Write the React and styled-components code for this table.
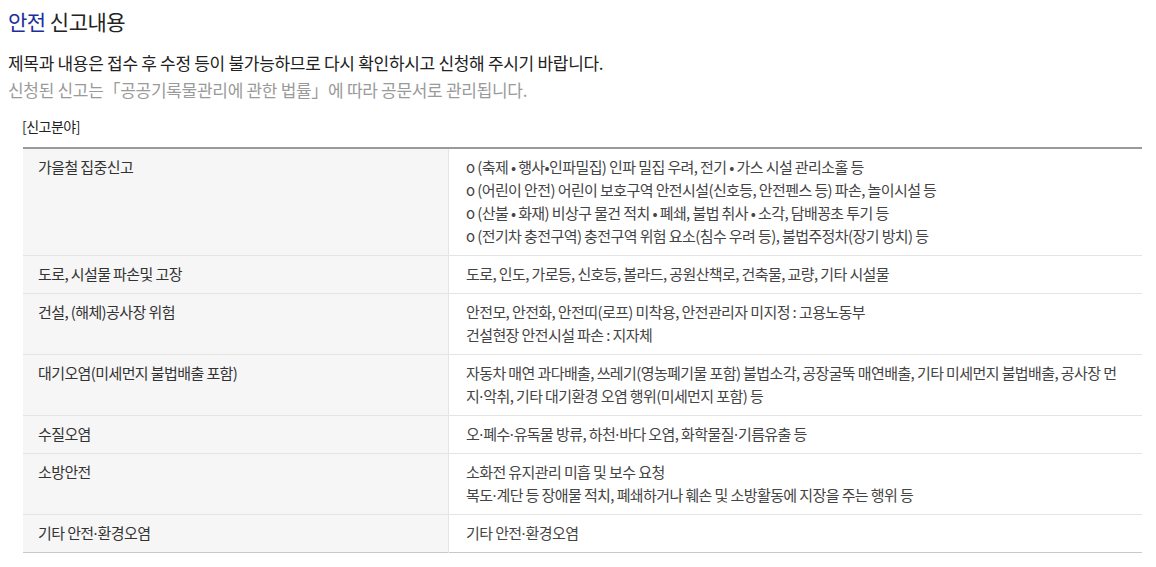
import React from 'react'
import styled, { createGlobalStyle } from 'styled-components'

const GlobalStyle = createGlobalStyle`
  body {
    margin: 0;
    background: #fff;
    font-family: 'Noto Sans CJK KR', 'Noto Sans', sans-serif;
    color: #333;
  }
`

const Page = styled.div`
  padding: 6px 14px 0 8px;
`

const Title = styled.h2`
  margin: 0;
  font-size: 21px;
  font-weight: 400;
  line-height: 30px;
  color: #222;
  letter-spacing: -0.5px;
`

const Accent = styled.span`
  color: #1b2f9c;
`

const Notice = styled.p`
  margin: 13px 0 0;
  font-size: 17px;
  line-height: 27px;
  letter-spacing: -0.3px;
  color: ${props => (props.muted ? '#9a9a9a' : '#222')};
  & + & {
    margin-top: 0;
  }
`

const Caption = styled.div`
  margin: 13px 0 0 14px;
  font-size: 14px;
  line-height: 20px;
  color: #222;
  letter-spacing: -0.5px;
`

const Table = styled.table`
  margin: 11px 0 0 15px;
  width: 1119px;
  table-layout: fixed;
  border-collapse: collapse;
  border-top: 2px solid #9a9a9a;
  border-bottom: 1px solid #c8c8c8;
  font-size: 15px;
  letter-spacing: -0.6px;
`

const Row = styled.tr`
  & + & {
    border-top: 1px solid #e4e4e4;
  }
`

const Head = styled.th`
  width: 395px;
  padding: 6px 15px 8px;
  background: #f6f6f6;
  border-right: 1px solid #e4e4e4;
  text-align: left;
  vertical-align: top;
  font-weight: 400;
  line-height: 23px;
  color: #333;
`

const Cell = styled.td`
  padding: 6px 17px 8px;
  vertical-align: top;
  line-height: 23px;
  color: #444;
`

const Line = styled.div``

// narrow middle dot, as in the original page
const Dot = styled.span`
  font-family: 'Noto Sans', sans-serif;
  letter-spacing: 0;
  line-height: 1;
`

const withDots = text =>
  text.split('·').map((part, i) => (
    <React.Fragment key={i}>
      {i > 0 && <Dot>·</Dot>}
      {part}
    </React.Fragment>
  ))

const rows = [
  {
    head: '가을철 집중신고',
    lines: [
      'o (축제 • 행사•인파밀집) 인파 밀집 우려, 전기 • 가스 시설 관리소홀 등',
      'o (어린이 안전) 어린이 보호구역 안전시설(신호등, 안전펜스 등) 파손, 놀이시설 등',
      'o (산불 • 화재) 비상구 물건 적치 • 폐쇄, 불법 취사 • 소각, 담배꽁초 투기 등',
      'o (전기차 충전구역) 충전구역 위험 요소(침수 우려 등), 불법주정차(장기 방치) 등'
    ]
  },
  {
    head: '도로, 시설물 파손및 고장',
    lines: ['도로, 인도, 가로등, 신호등, 볼라드, 공원산책로, 건축물, 교량, 기타 시설물']
  },
  {
    head: '건설, (해체)공사장 위험',
    lines: [
      '안전모, 안전화, 안전띠(로프) 미착용, 안전관리자 미지정 : 고용노동부',
      '건설현장 안전시설 파손 : 지자체'
    ]
  },
  {
    head: '대기오염(미세먼지 불법배출 포함)',
    lines: [
      '자동차 매연 과다배출, 쓰레기(영농폐기물 포함) 불법소각, 공장굴뚝 매연배출, 기타 미세먼지 불법배출, 공사장 먼지·악취, 기타 대기환경 오염 행위(미세먼지 포함) 등'
    ]
  },
  {
    head: '수질오염',
    lines: ['오·폐수·유독물 방류, 하천·바다 오염, 화학물질·기름유출 등']
  },
  {
    head: '소방안전',
    lines: [
      '소화전 유지관리 미흡 및 보수 요청',
      '복도·계단 등 장애물 적치, 폐쇄하거나 훼손 및 소방활동에 지장을 주는 행위 등'
    ]
  },
  {
    head: '기타 안전·환경오염',
    lines: ['기타 안전·환경오염']
  }
]

const App = () => (
  <Page>
    <GlobalStyle />
    <Title>
      <Accent>안전</Accent> 신고내용
    </Title>
    <Notice>제목과 내용은 접수 후 수정 등이 불가능하므로 다시 확인하시고 신청해 주시기 바랍니다.</Notice>
    <Notice muted>신청된 신고는「공공기록물관리에 관한 법률」에 따라 공문서로 관리됩니다.</Notice>
    <Caption>[신고분야]</Caption>
    <Table>
      <tbody>
        {rows.map(row => (
          <Row key={row.head}>
            <Head>{withDots(row.head)}</Head>
            <Cell>
              {row.lines.map(line => (
                <Line key={line}>{withDots(line)}</Line>
              ))}
            </Cell>
          </Row>
        ))}
      </tbody>
    </Table>
  </Page>
)

export default App
